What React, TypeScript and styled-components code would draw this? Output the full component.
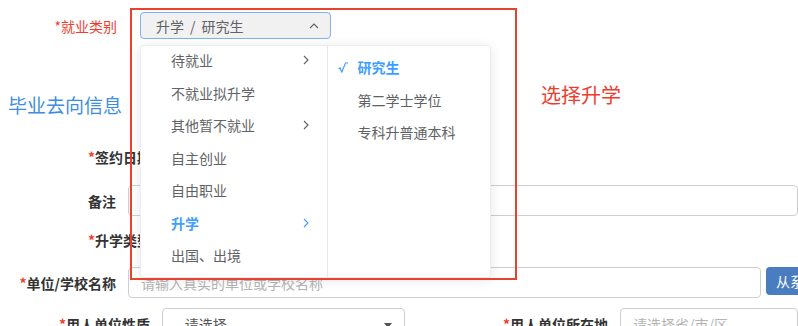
import React from "react";
import styled, { createGlobalStyle } from "styled-components";

const Global = createGlobalStyle`
  html, body { margin: 0; padding: 0; background: #fff; overflow: hidden; }
  body { font-family: "Noto Sans CJK SC", "Noto Sans", sans-serif; }
  * { box-sizing: border-box; }
`;

const Page = styled.div`
  position: relative;
  width: 798px;
  height: 326px;
  overflow: hidden;
`;

const Row = styled.div<{ $mt: number; $h: number; $pl?: number }>`
  display: flex;
  align-items: center;
  margin-top: ${(p) => p.$mt}px;
  height: ${(p) => p.$h}px;
  padding-left: ${(p) => p.$pl ?? 0}px;
`;

const Label = styled.div<{ $w?: number; $red?: boolean; $bold?: boolean }>`
  ${(p) => (p.$w ? `width: ${p.$w}px; text-align: right;` : "")}
  flex-shrink: 0;
  font-size: 14px;
  line-height: 20px;
  color: ${(p) => (p.$red ? "#ee3d2f" : "#333")};
  font-weight: ${(p) => (p.$bold ? 600 : 400)};
  white-space: nowrap;
`;

const Star = styled.span`
  color: #ee3d2f;
`;

const Trigger = styled.div`
  position: relative;
  margin-left: 23px;
  width: 191px;
  height: 27px;
  border: 1px solid #7eb0f2;
  border-radius: 4px;
  background: #f1f1f1;
  display: flex;
  align-items: center;
  justify-content: space-between;
  padding: 0 11px 0 15px;
  font-size: 14px;
  color: #606266;
`;

const Slash = styled.span`
  margin: 0 6px;
`;

const Title = styled.div`
  margin-top: 54px;
  padding-left: 8px;
  height: 24px;
  line-height: 24px;
  font-size: 19px;
  color: #3d8ee2;
`;

const Input = styled.div<{ $w?: number; $ml: number }>`
  margin-left: ${(p) => p.$ml}px;
  ${(p) => (p.$w ? `width: ${p.$w}px;` : "flex: 1 0 auto;")}
  align-self: stretch;
  border: 1px solid #cfcfcf;
  border-radius: 4px;
  display: flex;
  align-items: center;
  justify-content: space-between;
  padding: 0 12px;
  font-size: 14px;
  color: #b4b4b4;
  white-space: nowrap;
  flex-shrink: 0;
`;

const SelectText = styled.span`
  color: #555;
`;

const Caret = styled.span`
  width: 0;
  height: 0;
  border-left: 4px solid transparent;
  border-right: 4px solid transparent;
  border-top: 5px solid #555;
  margin-top: 4px;
`;

const Button = styled.div`
  margin-left: 5px;
  align-self: flex-start;
  height: 28px;
  width: 80px;
  flex-shrink: 0;
  background: #4a7dbf;
  border-radius: 4px;
  color: #fff;
  font-size: 14px;
  display: flex;
  align-items: center;
  padding-left: 10px;
`;

const Menu = styled.div`
  position: absolute;
  left: -1px;
  top: 32px;
  width: 351px;
  height: 233px;
  display: flex;
  background: #fff;
  border: 1px solid #eceef2;
  border-radius: 4px;
  box-shadow: 0 2px 12px 0 rgba(0, 0, 0, 0.1);
  overflow: hidden;
  z-index: 5;
`;

const Column = styled.div<{ $w: number; $mt: number; $divider?: boolean }>`
  width: ${(p) => p.$w}px;
  margin-top: ${(p) => p.$mt}px;
  border-right: ${(p) => (p.$divider ? "1px solid #e4e7ed" : "none")};
`;

const Item = styled.div<{ $active?: boolean; $pl: number }>`
  position: relative;
  height: 32.5px;
  display: flex;
  align-items: center;
  justify-content: space-between;
  padding: 0 18px 0 ${(p) => p.$pl}px;
  font-size: 14px;
  color: ${(p) => (p.$active ? "#409eff" : "#606266")};
  font-weight: ${(p) => (p.$active ? 600 : 400)};
`;

const Check = styled.svg`
  position: absolute;
  left: 10px;
  top: 11px;
`;

const RedBox = styled.div`
  position: absolute;
  left: 130px;
  top: 8px;
  width: 387px;
  height: 272px;
  border: 2px solid #e8412d;
  pointer-events: none;
  z-index: 6;
`;

const Note = styled.div`
  position: absolute;
  left: 541px;
  top: 82px;
  font-size: 20px;
  line-height: 26px;
  color: #ee3d2f;
`;

const Chevron = ({ color = "#606266", dir = "right" }: { color?: string; dir?: "right" | "up" }) =>
  dir === "right" ? (
    <svg width="6" height="10" viewBox="0 0 6 10">
      <path d="M1 1 L5 5 L1 9" fill="none" stroke={color} strokeWidth="1.1" />
    </svg>
  ) : (
    <svg width="10" height="6" viewBox="0 0 10 6">
      <path d="M1 5 L5 1 L9 5" fill="none" stroke={color} strokeWidth="1.1" />
    </svg>
  );

const left = [
  { t: "待就业", arrow: true },
  { t: "不就业拟升学" },
  { t: "其他暂不就业", arrow: true },
  { t: "自主创业" },
  { t: "自由职业" },
  { t: "升学", arrow: true, active: true },
  { t: "出国、出境" },
];

const right = [
  { t: "研究生", active: true },
  { t: "第二学士学位" },
  { t: "专科升普通本科" },
];

export default function App() {
  return (
    <Page>
      <Global />
      <Row $mt={12} $h={27} $pl={0}>
        <Label $w={117} $red>*就业类别</Label>
        <Trigger>
          <span>
            升学<Slash>/</Slash>研究生
          </span>
          <Chevron dir="up" />
          <Menu>
            <Column $w={188} $mt={-2} $divider>
              {left.map((i) => (
                <Item key={i.t} $pl={30} $active={i.active}>
                  <span>{i.t}</span>
                  {i.arrow && <Chevron color={i.active ? "#409eff" : "#606266"} />}
                </Item>
              ))}
            </Column>
            <Column $w={162} $mt={5}>
              {right.map((i) => (
                <Item key={i.t} $pl={29} $active={i.active}>
                  {i.active && (
                    <Check width="10" height="11" viewBox="0 0 10 11">
                      <path d="M0.5 7 L2 6 L3.8 10 L7.5 1 L10 1" fill="none" stroke="#409eff" strokeWidth="1.2" />
                    </Check>
                  )}
                  <span>{i.t}</span>
                </Item>
              ))}
            </Column>
          </Menu>
        </Trigger>
      </Row>
      <Title>毕业去向信息</Title>
      <Row $mt={24} $h={32} $pl={88}>
        <Label $bold><Star>*</Star>签约日期</Label>
      </Row>
      <Row $mt={12} $h={31} $pl={88}>
        <Label $bold style={{ width: 28 }}>备注</Label>
        <Input $ml={12} />
      </Row>
      <Row $mt={8} $h={32} $pl={88}>
        <Label $bold><Star>*</Star>升学类型</Label>
      </Row>
      <Row $mt={11} $h={31}>
        <Label $w={116} $bold><Star>*</Star>单位/学校名称</Label>
        <Input $ml={12} $w={633}>请输入真实的单位或学校名称</Input>
        <Button>从系统选择</Button>
      </Row>
      <Row $mt={10} $h={31}>
        <Label $w={150} $bold><Star>*</Star>用人单位性质</Label>
        <Input $ml={12} $w={243}>
          <SelectText>--请选择--</SelectText>
          <Caret />
        </Input>
        <Label $w={203} $bold><Star>*</Star>用人单位所在地</Label>
        <Input $ml={12}>请选择省/市/区</Input>
      </Row>
      <RedBox />
      <Note>选择升学</Note>
    </Page>
  );
}
